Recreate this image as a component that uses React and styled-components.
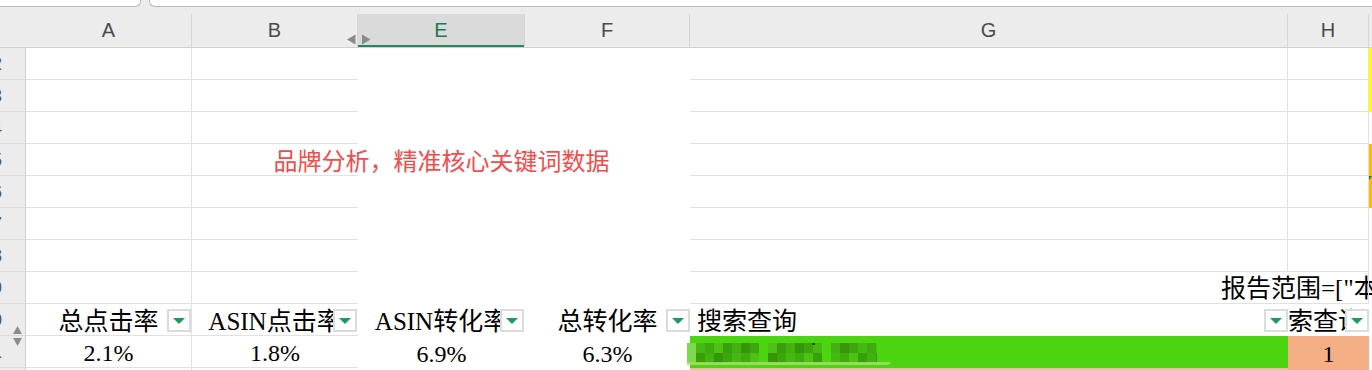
import React from 'react';
import styled, { createGlobalStyle } from 'styled-components';

const GlobalStyle = createGlobalStyle`
  *, *::before, *::after { box-sizing: border-box; }
  html, body { margin: 0; padding: 0; background: #fff; }
  body { font-family: "Liberation Sans", "Noto Sans CJK SC", sans-serif; }
`;

const COLS = '26px 166px 166px 167px 165px 598px 81px 3px';
const GRID = '#e1e1e1';
const CELL_FONT = '"Liberation Serif", "Noto Sans CJK SC", serif';

const Sheet = styled.div`
  position: relative;
  width: 1372px;
  height: 370px;
  overflow: hidden;
  background: #fff;
`;

const TabBar = styled.div`
  display: flex;
  height: 7px;
  background: #ececec;
`;

const Tab = styled.div`
  height: 7px;
  background: #fff;
  border-bottom: 1px solid #b9b9b9;
  ${p => p.$first
    ? 'width: 141px; border-right: 1px solid #b9b9b9; border-bottom-right-radius: 6px;'
    : 'flex: 1; margin-left: 8px; border-left: 1px solid #b9b9b9; border-bottom-left-radius: 6px;'}
`;

const HeaderBand = styled.div`
  position: relative;
  display: grid;
  grid-template-columns: ${COLS};
  height: 41px;
  background: #ececec;
  border-bottom: 1px solid #d0d0d0;
`;

const ColHead = styled.div`
  margin-top: 7px;
  display: flex;
  align-items: center;
  justify-content: center;
  border-right: ${p => p.$plain ? 'none' : '1px solid #d6d6d6'};
  font-size: 20px;
  color: ${p => p.$active ? '#1b7b4d' : '#4a4a4a'};
  background: ${p => p.$active ? '#dadada' : 'transparent'};
  box-shadow: ${p => p.$active ? 'inset 0 -2px 0 #1e8b58' : 'none'};
`;

const HiddenMark = styled.svg`
  position: absolute;
  left: 347px;
  top: 27px;
`;

const Row = styled.div`
  display: grid;
  grid-template-columns: ${COLS};
  height: 32px;
`;

const RowHead = styled.div`
  display: flex;
  align-items: center;
  justify-content: flex-end;
  padding-right: 23px;
  overflow: hidden;
  background: #ececec;
  border-right: 1px solid #cfcfcf;
  border-bottom: 1px solid #dadada;
  font-size: 19px;
  line-height: 1;
  color: #555;
`;

const Cell = styled.div`
  position: relative;
  display: flex;
  align-items: center;
  justify-content: ${p => p.$align || 'center'};
  padding: ${p => p.$pad || '0'};
  white-space: nowrap;
  overflow: ${p => p.$clip ? 'hidden' : 'visible'};
  border-right: ${p => p.$right ? `1px solid ${GRID}` : 'none'};
  border-bottom: ${p => p.$bottom ? `1px solid ${GRID}` : 'none'};
  background: ${p => p.$bg || 'transparent'};
  font-family: ${CELL_FONT};
  font-size: ${p => p.$size || 25}px;
  line-height: 1;
  color: #000;
`;

const Strip = styled.div`
  position: relative;
  background: ${p => p.$color || 'transparent'};
`;

const NoteCorner = styled.div`
  position: absolute;
  left: 0;
  top: 0;
  width: 0;
  height: 0;
  border-top: 4px solid #1d7a2e;
  border-right: 3px solid transparent;
`;

const Title = styled.span`
  font-family: "Noto Sans CJK SC", "Liberation Sans", sans-serif;
  font-size: 24px;
  line-height: 1;
  color: #f44b4b;
`;

const FilterBtn = styled.div`
  position: absolute;
  top: 5px;
  right: ${p => p.$r ?? 1}px;
  width: 24px;
  height: 23px;
  display: flex;
  align-items: center;
  justify-content: center;
  background: #fff;
  border: 2px solid #dcdcdc;
  &::after {
    content: '';
    border-left: 6px solid transparent;
    border-right: 6px solid transparent;
    border-top: 6px solid #1b9a62;
  }
`;

const SortMark = styled.svg`
  position: absolute;
  left: 12px;
  top: 325px;
`;

const Mosaic = styled.svg`
  margin-left: -3px;
  margin-top: 6px;
  display: block;
`;

const rows = [
  { label: 2, strip: '#ffff00' },
  { label: 3, strip: '#ffff00' },
  { label: 4 },
  { label: 5, strip: '#f9bc00', title: true },
  { label: 6, strip: '#f9bc00', note: true },
  { label: 7 },
  { label: 8 },
  { label: 9, report: true },
];

const headers = [
  { text: '总点击率', r: 0 },
  { text: 'ASIN点击率', r: 1 },
  { text: 'ASIN转化率', r: 1 },
  { text: '总转化率', r: 0 },
];

const values = ['2.1%', '1.8%', '6.9%', '6.3%'];

const mosaicGroups = [
  { x: 9, w: 63 },
  { x: 81, w: 54 },
  { x: 144, w: 46 },
];
const greens = ['#46b812', '#3fab0f', '#4cc314', '#39a00c', '#43b211', '#35960a', '#3da60e'];

const BlurredText = () => {
  const cells = [];
  mosaicGroups.forEach((g, gi) => {
    for (let cx = 0; cx < g.w; cx += 9) {
      for (let r = 0; r < 2; r++) {
        const c = greens[(cx / 9 + r * 3 + gi * 2) % greens.length];
        cells.push(
          <rect key={`${gi}-${cx}-${r}`} x={g.x + cx} y={r * 10} width={Math.min(9, g.w - cx)} height={10} fill={c} />
        );
      }
    }
  });
  return (
    <Mosaic width="215" height="24" viewBox="0 0 215 24">
      <rect x="0" y="0" width="10" height="20" fill="#7fd94f" />
      {cells}
      <rect x="125" y="0" width="3" height="2" fill="#1d4f06" />
      <path d="M0 19 L200 19 Q208 20 200 22 L0 22 Z" fill="#a8da6c" opacity="0.85" />
    </Mosaic>
  );
};

const App = () => {
  return (
    <Sheet>
      <GlobalStyle />
      <TabBar>
        <Tab $first />
        <Tab />
      </TabBar>

      <HeaderBand>
        <ColHead $plain />
        <ColHead>A</ColHead>
        <ColHead>B</ColHead>
        <ColHead $active>E</ColHead>
        <ColHead>F</ColHead>
        <ColHead>G</ColHead>
        <ColHead>H</ColHead>
        <ColHead $plain />
        <HiddenMark width="24" height="11" viewBox="0 0 24 11">
          <path d="M0 5.5 L8.5 0.5 L8.5 10.5 Z" fill="#8a8a8a" />
          <path d="M23.5 5.5 L15 0.5 L15 10.5 Z" fill="#8a8a8a" />
        </HiddenMark>
      </HeaderBand>

      {rows.map(row => (
        <Row key={row.label}>
          <RowHead>{row.label}</RowHead>
          <Cell $right $bottom />
          <Cell $bottom />
          <Cell>{row.title && <Title>品牌分析，精准核心关键词数据</Title>}</Cell>
          <Cell />
          <Cell $right={!row.report} $bottom $align="flex-start" $pad={row.report ? '1px 0 0 531px' : '0'} $size={25}>
            {row.report && '报告范围=["本周"]'}
          </Cell>
          <Cell $right $bottom />
          <Strip $color={row.strip}>{row.note && <NoteCorner />}</Strip>
        </Row>
      ))}

      <Row>
        <RowHead>10</RowHead>
        {headers.map((h, i) => (
          <Cell key={h.text} $right={i === 0} $bottom={i < 2} $pad="3px 0 0 0" $clip>
            {h.text}
            <FilterBtn $r={h.r} />
          </Cell>
        ))}
        <Cell $align="flex-start" $pad="3px 0 0 7px">
          搜索查询
          <FilterBtn $r={0} />
        </Cell>
        <Cell $align="flex-end" $pad="3px 6px 0 0" $clip>
          搜索查询
          <FilterBtn $r={0} />
        </Cell>
        <Strip />
      </Row>

      <Row>
        <RowHead>11</RowHead>
        {values.map((v, i) => (
          <Cell key={v} $right={i === 0} $bottom={i < 2} $size={24} $pad="3px 0 0 0">{v}</Cell>
        ))}
        <Cell $bg="#4bd40f" $align="flex-start">
          <BlurredText />
        </Cell>
        <Cell $bg="#f4af84" $size={24} $pad="3px 0 0 0">1</Cell>
        <Strip />
      </Row>

      <Row>
        <RowHead>12</RowHead>
        <Cell $right $bottom />
        <Cell $bottom />
        <Cell />
        <Cell />
        <Cell $bg="#e2c596" />
        <Cell $bg="#f4af84" />
        <Strip />
      </Row>

      <SortMark width="11" height="22" viewBox="0 0 11 22">
        <path d="M5.5 1 L10 9 L1 9 Z" fill="#8c8c8c" />
        <path d="M5.5 21 L10 13 L1 13 Z" fill="#8c8c8c" />
      </SortMark>
    </Sheet>
  );
};

export default App;
